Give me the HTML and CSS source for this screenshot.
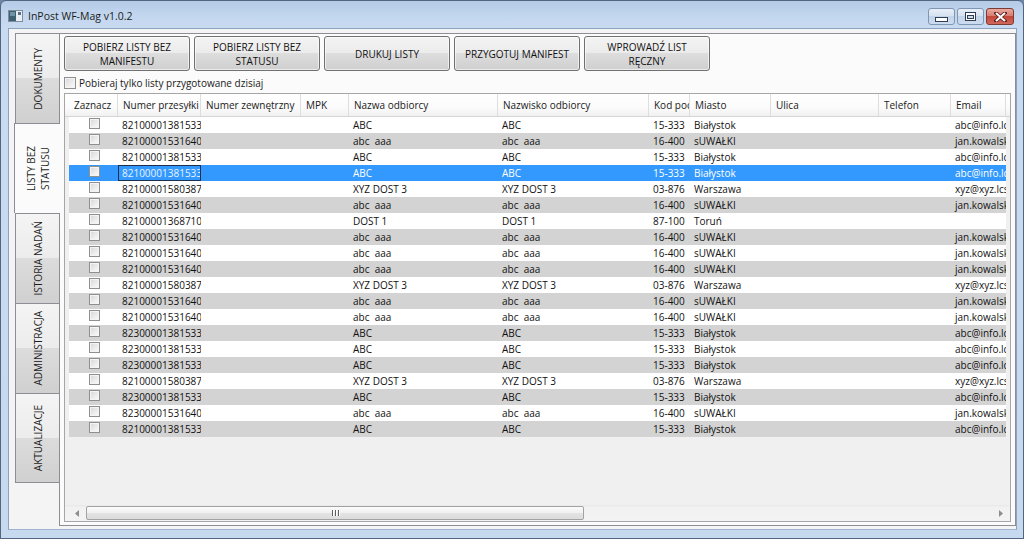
FILE: index.html
```html
<!DOCTYPE html>
<html lang="pl">
<head>
<meta charset="utf-8">
<title>InPost WF-Mag v1.0.2</title>
<link rel="stylesheet" href="styles.css">
</head>
<body>
<div class="window">
  <div class="titlebar">
    <svg class="appicon" width="15" height="12" viewBox="0 0 15 12">
      <rect x="0.5" y="0.5" width="14" height="11" fill="#e9eef4" stroke="#7f8c99"/>
      <rect x="1" y="1" width="7" height="10" fill="#3d6173"/>
      <rect x="2" y="2" width="5" height="4" fill="#6f93a6"/>
      <rect x="10" y="2" width="3" height="3" fill="#5b7082"/>
    </svg>
    <span class="title">InPost WF-Mag v1.0.2</span>
    <div class="caption">
      <div class="cbtn">
        <svg width="13" height="5" viewBox="0 0 13 5"><rect x="0.5" y="0.5" width="12" height="4" fill="#fff" stroke="#2d3e55"/></svg>
      </div>
      <div class="cbtn">
        <svg width="11" height="9" viewBox="0 0 11 9"><rect x="0.5" y="0.5" width="10" height="8" fill="#fff" stroke="#2d3e55"/><rect x="2.5" y="3.5" width="6" height="3" fill="#cfdbe9" stroke="#2d3e55"/></svg>
      </div>
      <div class="cbtn close">
        <svg width="13" height="10" viewBox="0 0 13 10"><path d="M2 1 L11 9 M11 1 L2 9" stroke="#5a2020" stroke-width="3.6" stroke-linecap="square"/><path d="M2 1 L11 9 M11 1 L2 9" stroke="#fff" stroke-width="2"/></svg>
      </div>
    </div>
  </div>

  <div class="client">
    <div class="tabstrip">
      <div class="tab"><span class="tlabel">DOKUMENTY</span></div>
      <div class="tab active"><span class="tlabel">LISTY BEZ<br>STATUSU</span></div>
      <div class="tab"><span class="tlabel">ISTORIA NADAŃ</span></div>
      <div class="tab"><span class="tlabel">ADMINISTRACJA</span></div>
      <div class="tab last"><span class="tlabel">AKTUALIZACJE</span></div>
    </div>

    <div class="panel">
      <div class="toolbar">
        <div class="btn">POBIERZ LISTY BEZ<br>MANIFESTU</div>
        <div class="btn">POBIERZ LISTY BEZ<br>STATUSU</div>
        <div class="btn">DRUKUJ LISTY</div>
        <div class="btn">PRZYGOTUJ MANIFEST</div>
        <div class="btn">WPROWADŹ LIST<br>RĘCZNY</div>
      </div>
      <div class="chkrow"><span class="cb"></span><span>Pobieraj tylko listy przygotowane dzisiaj</span></div>

      <div class="grid">
        <div class="ghead cols">
          <div class="h">Zaznacz</div>
          <div class="h">Numer przesyłki</div>
          <div class="h">Numer zewnętrzny</div>
          <div class="h">MPK</div>
          <div class="h">Nazwa odbiorcy</div>
          <div class="h">Nazwisko odbiorcy</div>
          <div class="h">Kod pocztowy</div>
          <div class="h">Miasto</div>
          <div class="h">Ulica</div>
          <div class="h">Telefon</div>
          <div class="h">Email</div>
        </div>
        <div class="gbody">
          <div class="row cols"><div class="c ck"><span class="cb"></span></div><div class="c">8210000138153300012</div><div class="c"></div><div class="c"></div><div class="c">ABC</div><div class="c">ABC</div><div class="c">15-333</div><div class="c">Białystok</div><div class="c"></div><div class="c"></div><div class="c">abc@info.lcs.pl</div></div>
          <div class="row cols alt"><div class="c ck"><span class="cb"></span></div><div class="c">8210000153164000012</div><div class="c"></div><div class="c"></div><div class="c">abc  aaa</div><div class="c">abc  aaa</div><div class="c">16-400</div><div class="c">sUWAŁKI</div><div class="c"></div><div class="c"></div><div class="c">jan.kowalski@info.pl</div></div>
          <div class="row cols"><div class="c ck"><span class="cb"></span></div><div class="c">8210000138153300013</div><div class="c"></div><div class="c"></div><div class="c">ABC</div><div class="c">ABC</div><div class="c">15-333</div><div class="c">Białystok</div><div class="c"></div><div class="c"></div><div class="c">abc@info.lcs.pl</div></div>
          <div class="row cols sel"><div class="c ck"><span class="cb"></span></div><div class="c focus">8210000138153300014</div><div class="c"></div><div class="c"></div><div class="c">ABC</div><div class="c">ABC</div><div class="c">15-333</div><div class="c">Białystok</div><div class="c"></div><div class="c"></div><div class="c">abc@info.lcs.pl</div></div>
          <div class="row cols"><div class="c ck"><span class="cb"></span></div><div class="c">8210000158038700012</div><div class="c"></div><div class="c"></div><div class="c">XYZ DOST 3</div><div class="c">XYZ DOST 3</div><div class="c">03-876</div><div class="c">Warszawa</div><div class="c"></div><div class="c"></div><div class="c">xyz@xyz.lcs.pl</div></div>
          <div class="row cols alt"><div class="c ck"><span class="cb"></span></div><div class="c">8210000153164000013</div><div class="c"></div><div class="c"></div><div class="c">abc  aaa</div><div class="c">abc  aaa</div><div class="c">16-400</div><div class="c">sUWAŁKI</div><div class="c"></div><div class="c"></div><div class="c">jan.kowalski@info.pl</div></div>
          <div class="row cols"><div class="c ck"><span class="cb"></span></div><div class="c">8210000136871000012</div><div class="c"></div><div class="c"></div><div class="c">DOST 1</div><div class="c">DOST 1</div><div class="c">87-100</div><div class="c">Toruń</div><div class="c"></div><div class="c"></div><div class="c"></div></div>
          <div class="row cols alt"><div class="c ck"><span class="cb"></span></div><div class="c">8210000153164000014</div><div class="c"></div><div class="c"></div><div class="c">abc  aaa</div><div class="c">abc  aaa</div><div class="c">16-400</div><div class="c">sUWAŁKI</div><div class="c"></div><div class="c"></div><div class="c">jan.kowalski@info.pl</div></div>
          <div class="row cols"><div class="c ck"><span class="cb"></span></div><div class="c">8210000153164000015</div><div class="c"></div><div class="c"></div><div class="c">abc  aaa</div><div class="c">abc  aaa</div><div class="c">16-400</div><div class="c">sUWAŁKI</div><div class="c"></div><div class="c"></div><div class="c">jan.kowalski@info.pl</div></div>
          <div class="row cols alt"><div class="c ck"><span class="cb"></span></div><div class="c">8210000153164000016</div><div class="c"></div><div class="c"></div><div class="c">abc  aaa</div><div class="c">abc  aaa</div><div class="c">16-400</div><div class="c">sUWAŁKI</div><div class="c"></div><div class="c"></div><div class="c">jan.kowalski@info.pl</div></div>
          <div class="row cols"><div class="c ck"><span class="cb"></span></div><div class="c">8210000158038700013</div><div class="c"></div><div class="c"></div><div class="c">XYZ DOST 3</div><div class="c">XYZ DOST 3</div><div class="c">03-876</div><div class="c">Warszawa</div><div class="c"></div><div class="c"></div><div class="c">xyz@xyz.lcs.pl</div></div>
          <div class="row cols alt"><div class="c ck"><span class="cb"></span></div><div class="c">8210000153164000017</div><div class="c"></div><div class="c"></div><div class="c">abc  aaa</div><div class="c">abc  aaa</div><div class="c">16-400</div><div class="c">sUWAŁKI</div><div class="c"></div><div class="c"></div><div class="c">jan.kowalski@info.pl</div></div>
          <div class="row cols"><div class="c ck"><span class="cb"></span></div><div class="c">8210000153164000018</div><div class="c"></div><div class="c"></div><div class="c">abc  aaa</div><div class="c">abc  aaa</div><div class="c">16-400</div><div class="c">sUWAŁKI</div><div class="c"></div><div class="c"></div><div class="c">jan.kowalski@info.pl</div></div>
          <div class="row cols alt"><div class="c ck"><span class="cb"></span></div><div class="c">8230000138153300012</div><div class="c"></div><div class="c"></div><div class="c">ABC</div><div class="c">ABC</div><div class="c">15-333</div><div class="c">Białystok</div><div class="c"></div><div class="c"></div><div class="c">abc@info.lcs.pl</div></div>
          <div class="row cols"><div class="c ck"><span class="cb"></span></div><div class="c">8230000138153300013</div><div class="c"></div><div class="c"></div><div class="c">ABC</div><div class="c">ABC</div><div class="c">15-333</div><div class="c">Białystok</div><div class="c"></div><div class="c"></div><div class="c">abc@info.lcs.pl</div></div>
          <div class="row cols alt"><div class="c ck"><span class="cb"></span></div><div class="c">8230000138153300014</div><div class="c"></div><div class="c"></div><div class="c">ABC</div><div class="c">ABC</div><div class="c">15-333</div><div class="c">Białystok</div><div class="c"></div><div class="c"></div><div class="c">abc@info.lcs.pl</div></div>
          <div class="row cols"><div class="c ck"><span class="cb"></span></div><div class="c">8210000158038700014</div><div class="c"></div><div class="c"></div><div class="c">XYZ DOST 3</div><div class="c">XYZ DOST 3</div><div class="c">03-876</div><div class="c">Warszawa</div><div class="c"></div><div class="c"></div><div class="c">xyz@xyz.lcs.pl</div></div>
          <div class="row cols alt"><div class="c ck"><span class="cb"></span></div><div class="c">8230000138153300015</div><div class="c"></div><div class="c"></div><div class="c">ABC</div><div class="c">ABC</div><div class="c">15-333</div><div class="c">Białystok</div><div class="c"></div><div class="c"></div><div class="c">abc@info.lcs.pl</div></div>
          <div class="row cols"><div class="c ck"><span class="cb"></span></div><div class="c">8230000153164000012</div><div class="c"></div><div class="c"></div><div class="c">abc  aaa</div><div class="c">abc  aaa</div><div class="c">16-400</div><div class="c">sUWAŁKI</div><div class="c"></div><div class="c"></div><div class="c">jan.kowalski@info.pl</div></div>
          <div class="row cols alt"><div class="c ck"><span class="cb"></span></div><div class="c">8210000138153300015</div><div class="c"></div><div class="c"></div><div class="c">ABC</div><div class="c">ABC</div><div class="c">15-333</div><div class="c">Białystok</div><div class="c"></div><div class="c"></div><div class="c">abc@info.lcs.pl</div></div>
        </div>
        <div class="hscroll">
          <div class="arrow left"><svg width="4" height="7" viewBox="0 0 4 7"><path d="M4 0 L0 3.5 L4 7 Z" fill="#8d8d8d"/></svg></div>
          <div class="thumb"><span class="grip"></span><span class="grip"></span><span class="grip"></span></div>
          <div class="track"></div>
          <div class="arrow right"><svg width="4" height="7" viewBox="0 0 4 7"><path d="M0 0 L4 3.5 L0 7 Z" fill="#8d8d8d"/></svg></div>
        </div>
      </div>
    </div>
  </div>
</div>
</body>
</html>
```

FILE: styles.css
```css
* { box-sizing: border-box; }
html, body { margin: 0; padding: 0; }
body {
  width: 1024px;
  height: 539px;
  overflow: hidden;
  font-family: "Segoe UI", "Open Sans", "Noto Sans", sans-serif;
  font-size: 10px;
  color: #000;
  background: #6d87a8;
}

.window {
  width: 1024px;
  height: 539px;
  display: flex;
  flex-direction: column;
  border: 1px solid #52667f;
  border-radius: 6px 6px 0 0;
  padding: 0 6px 8px 7px;
  background: linear-gradient(#b4cae6 0, #c2d6ee 14px, #c9dbf1 28px, #c6d9ef 100%);
}

/* title bar */
.titlebar {
  height: 27px;
  flex: 0 0 27px;
  display: flex;
  align-items: center;
  padding: 0 3px 0 0;
}
.appicon { margin: 2px 5px 0 0; }
.title {
  font-size: 10.5px;
  color: #1b1b1b;
  padding-top: 2px;
}
.caption {
  margin-left: auto;
  align-self: flex-start;
  margin-top: 7px;
  display: flex;
  gap: 2px;
}
.cbtn {
  width: 27px;
  height: 17px;
  border: 1px solid #7f95b1;
  border-radius: 3px;
  background: linear-gradient(#e7eef7 0, #d4e1f0 50%, #c3d4ea 50%, #cddcef 100%);
  display: flex;
  align-items: center;
  justify-content: center;
}
.cbtn:first-child svg { margin-top: 5px; }
.cbtn.close {
  width: 28px;
  border-color: #7d3b35;
  background: linear-gradient(#e9a99f 0, #d8786b 50%, #c4473a 50%, #d0685a 100%);
}

/* client area */
.client {
  flex: 1;
  display: flex;
  border: 1px solid #8ca3c0;
  border-bottom-color: #9fb4cf;
  background: #f4f4f4;
  padding: 4px 0 3px 6px;
  min-height: 0;
}

.tabstrip {
  flex: 0 0 44px;
  display: flex;
  flex-direction: column;
}
.tab {
  height: 90px;
  flex: 0 0 90px;
  border: 1px solid #8c8e94;
  border-right: none;
  border-bottom: none;
  background: linear-gradient(#f4f4f4 0, #ececec 50%, #dcdcdc 50%, #d0d0d0 100%);
  display: flex;
  align-items: center;
  justify-content: center;
  color: #1e1e1e;
}
.tab.last { border-bottom: 1px solid #8c8e94; }
.tab.active {
  background: #fbfbfb;
  margin: 0 -1px 0 -1px;
  position: relative;
  z-index: 1;
}
.tlabel {
  writing-mode: vertical-rl;
  transform: rotate(180deg);
  text-align: center;
  line-height: 14px;
  white-space: nowrap;
}

/* tab content */
.panel {
  flex: 1;
  display: flex;
  flex-direction: column;
  border: 1px solid #8c8e94;
  background: #fbfbfb;
  padding: 2px 4px 3px 4px;
  min-width: 0;
}

.toolbar {
  display: flex;
  gap: 4px;
  height: 35px;
  flex: 0 0 35px;
}
.btn {
  width: 126px;
  border: 1px solid #707070;
  border-radius: 3px;
  background: linear-gradient(#f3f3f3 0, #ebebeb 50%, #dddddd 50%, #cfcfcf 100%);
  display: flex;
  align-items: center;
  justify-content: center;
  text-align: center;
  line-height: 14px;
  color: #111;
  box-shadow: inset 0 0 0 1px rgba(255,255,255,0.6);
}

.chkrow {
  margin-top: 5px;
  height: 13px;
  display: flex;
  align-items: center;
  gap: 3px;
  color: #1a1a1a;
}
.cb {
  display: block;
  width: 12px;
  height: 12px;
  border: 1px solid #8e8f8f;
  background: linear-gradient(135deg, #d6d6d6 0, #eeeeee 60%, #fafafa 100%);
  box-shadow: inset 0 0 0 1px #f4f4f4;
}

/* data grid */
.grid {
  margin-top: 4px;
  flex: 1;
  display: flex;
  flex-direction: column;
  border: 1px solid #a6a6a6;
  background: #f0f0f0;
  overflow: hidden;
  min-height: 0;
}
.cols {
  display: grid;
  grid-template-columns: 49px 83px 100px 48px 149px 151px 41px 81px 108px 72px 55px;
}
.ghead {
  height: 23px;
  flex: 0 0 23px;
  padding: 0 4px;
  background: linear-gradient(#ffffff 0, #fbfbfb 60%, #f1f1f1 100%);
  border-bottom: 1px solid #d5d5d5;
}
.h {
  padding-left: 5px;
  line-height: 22px;
  border-right: 1px solid #dedede;
  white-space: nowrap;
  overflow: hidden;
  color: #1a1a1a;
}
.gbody {
  flex: 1;
  padding: 0 4px;
  min-height: 0;
}
.row {
  height: 16px;
  background: #ffffff;
  color: #111;
}
.row.alt { background: #d3d3d3; }
.row.sel { background: #3399ff; color: #fff; }
.c {
  padding-left: 4px;
  line-height: 16px;
  white-space: pre;
  overflow: hidden;
}
.c.ck {
  display: flex;
  justify-content: center;
  align-items: flex-start;
  padding: 1px 0 0 1px;
}
.c.ck .cb { width: 11px; height: 11px; }
.c.focus {
  border: 1px solid #1c2f4d;
  padding-left: 3px;
  line-height: 14px;
  color: #e9f3ff;
}

/* horizontal scrollbar */
.hscroll {
  height: 16px;
  flex: 0 0 16px;
  display: flex;
  align-items: center;
  background: linear-gradient(#e6e6e6 0, #f1f1f1 2px, #f3f3f3 100%);
}
.arrow {
  height: 16px;
  display: flex;
  align-items: center;
  justify-content: center;
}
.arrow.left { width: 21px; padding-left: 3px; }
.arrow.right { width: 19px; padding-right: 0; }
.thumb {
  width: 498px;
  height: 14px;
  border: 1px solid #a2a2a2;
  border-radius: 2px;
  background: linear-gradient(#fbfbfb 0, #f0f0f0 50%, #e3e3e3 50%, #dcdcdc 100%);
  display: flex;
  align-items: center;
  justify-content: center;
  gap: 2px;
}
.grip {
  width: 1px;
  height: 6px;
  background: #5f5f5f;
  box-shadow: 1px 0 0 #ffffff;
}
.track { flex: 1; }
```
